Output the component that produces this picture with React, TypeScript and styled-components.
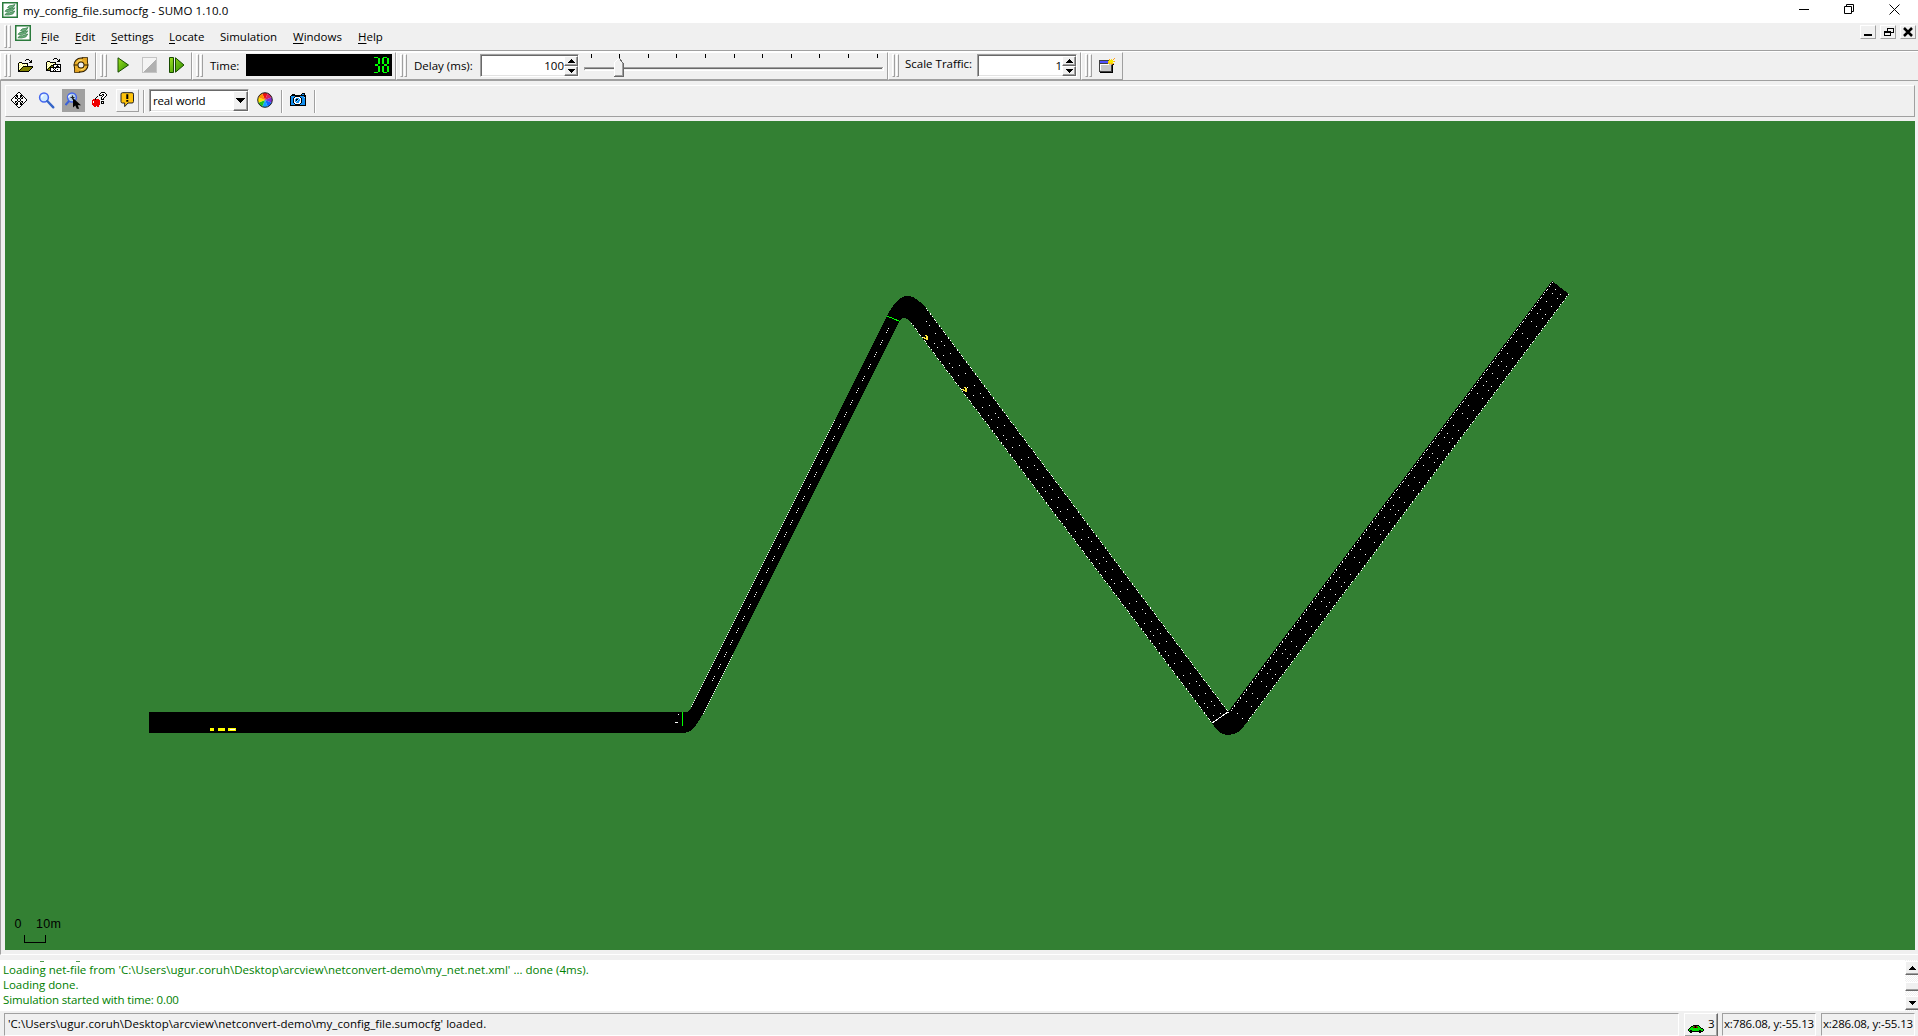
import React from "react";
import styled, { createGlobalStyle, css } from "styled-components";

const Global = createGlobalStyle`
  * { box-sizing: border-box; }
  html, body { margin: 0; padding: 0; overflow: hidden; }
  body { font: 11.5px/15px "Open Sans", "Noto Sans", sans-serif; color: #000; background: #f0f0f0; }
`;

const FACE = "#f0f0f0";
const SHADOW = "#a0a0a0";
const DARK = "#696969";

const raised = css`
  border: 1px solid;
  border-color: #fff ${SHADOW} ${SHADOW} #fff;
`;
const raisedThick = css`
  border: 1px solid;
  border-color: #fff ${DARK} ${DARK} #fff;
  box-shadow: inset -1px -1px ${SHADOW};
`;
const sunken = css`
  border: 1px solid;
  border-color: ${SHADOW} #fff #fff ${SHADOW};
  box-shadow: inset 1px 1px ${DARK}, inset -1px -1px #e3e3e3;
`;

const Window = styled.div`
  width: 1918px;
  height: 1036px;
  display: flex;
  flex-direction: column;
  background: ${FACE};
  overflow: hidden;
`;

const Label = styled.span<{ $w: number; $ls?: number }>`
  flex: none;
  width: ${(p) => p.$w}px;
  white-space: pre;
  letter-spacing: ${(p) => p.$ls ?? 0}px;
  u { text-underline-offset: 2px; }
`;

const TitleBar = styled.header`
  height: 23px;
  flex: none;
  display: flex;
  background: #fff;
  padding: 2px 18px 0 2px;
`;
const TitleText = styled(Label)`
  margin-left: 5px;
  padding-top: 1px;
`;
const CaptionButtons = styled.div`
  margin-left: auto;
  display: flex;
  gap: 35px;
  padding-top: 2px;
`;

const MenuBar = styled.nav`
  height: 28px;
  flex: none;
  display: flex;
  border-bottom: 1px solid ${SHADOW};
  padding: 2px 2px 0 4px;
`;
const MenuItems = styled.div`
  display: flex;
  gap: 16px;
  margin-left: 10px;
  padding-top: 4px;
`;
const MdiButtons = styled.div`
  margin-left: auto;
  display: flex;
  gap: 4px;
`;
const MdiButton = styled.button`
  width: 16px;
  height: 14px;
  padding: 0;
  display: flex;
  background: ${FACE};
  ${raised}
`;

const GripBox = styled.div`
  flex: none;
  display: flex;
  gap: 1px;
  height: 23px;
  i { width: 3px; ${raised} }
`;
const Grip = () => <GripBox><i /><i /></GripBox>;

const DockRow = styled.div`
  height: 30px;
  flex: none;
  display: flex;
  border-top: 1px solid #fff;
  border-bottom: 1px solid ${SHADOW};
`;
const Dock = styled.section<{ $w: number }>`
  flex: none;
  width: ${(p) => p.$w}px;
  display: flex;
  border: 1px solid;
  border-color: #fff ${SHADOW} ${SHADOW} #fff;
  padding: 1px 0 0 3px;
`;
const Slot = styled.div<{ $ml: number; $mt?: number }>`
  flex: none;
  display: flex;
  margin-left: ${(p) => p.$ml}px;
  margin-top: ${(p) => p.$mt ?? 0}px;
`;

const Lcd = styled.div`
  width: 146px;
  height: 22px;
  background: #000;
  display: flex;
  justify-content: flex-end;
  padding: 1px 2px 0 0;
`;

const NumberField = styled.div<{ $w: number }>`
  width: ${(p) => p.$w}px;
  height: 23px;
  display: flex;
  justify-content: flex-end;
  align-items: center;
  background: #fff;
  ${sunken}
`;
const Spinner = styled.div`
  display: flex;
  flex-direction: column;
  width: 14px;
  height: 20px;
`;
const SpinButton = styled.button`
  width: 14px;
  height: 10px;
  padding: 0;
  display: flex;
  background: ${FACE};
  ${raisedThick}
`;

const ViewFrame = styled.main`
  height: 874px;
  flex: none;
  display: flex;
  flex-direction: column;
  border-left: 1px solid ${SHADOW};
  border-bottom: 1px solid #fff;
  padding: 4px 3px 0 4px;
`;
const ViewBar = styled.div`
  height: 32px;
  flex: none;
  display: flex;
  border: 1px solid;
  border-color: #fff ${SHADOW} ${SHADOW} #fff;
  padding-top: 3px;
`;
const ToolButton = styled.button<{ $pressed?: boolean; $raised?: boolean }>`
  flex: none;
  width: 23px;
  height: 23px;
  padding: 2px;
  display: flex;
  border: 1px solid transparent;
  background: ${(p) => (p.$pressed ? SHADOW : "transparent")};
  ${(p) => p.$raised && raised}
`;
const Divider = styled.i<{ $ml: number }>`
  flex: none;
  width: 2px;
  height: 23px;
  margin-top: 1px;
  margin-left: ${(p) => p.$ml}px;
  background: linear-gradient(90deg, ${SHADOW} 1px, #fff 1px);
`;
const Combo = styled.div`
  flex: none;
  width: 100px;
  height: 23px;
  display: flex;
  align-items: center;
  justify-content: space-between;
  background: #fff;
  margin-left: 4px;
  padding-left: 3px;
  ${sunken}
`;
const ComboButton = styled.button`
  width: 15px;
  height: 20px;
  padding: 0;
  display: flex;
  align-items: center;
  justify-content: center;
  background: ${FACE};
  ${raisedThick}
`;

const Canvas = styled.svg`
  flex: none;
  display: block;
  margin-top: 4px;
  background: #338033;
`;

const LogArea = styled.div`
  height: 51px;
  flex: none;
  margin-top: 5px;
  display: flex;
  justify-content: space-between;
  background: #fff;
  color: #008000;
`;
const LogLines = styled.div`
  display: flex;
  flex-direction: column;
  padding-left: 3px;
`;
/* Bottom edge of the log row that is scrolled out above the visible lines. */
const ScrolledRow = styled.div`
  height: 1px;
  margin: 1px 0 0 37px;
  display: flex;
  gap: 32px;
  i { width: 4px; background: #4d9a4d; }
`;
const ScrollBar = styled.div`
  width: 13px;
  display: flex;
  flex-direction: column;
  background: repeating-conic-gradient(#fff 0 25%, ${FACE} 0 50%) 0 0 / 2px 2px;
`;
const ScrollPart = styled.div<{ $h: number; $mt: number }>`
  width: 15px;
  height: ${(p) => p.$h}px;
  margin-top: ${(p) => p.$mt}px;
  background: ${FACE};
  ${raisedThick}
  display: flex;
`;

const StatusBar = styled.footer`
  height: 26px;
  flex: none;
  display: flex;
  padding: 2px 3px 0 4px;
`;
const StatusCell = styled.div<{ $w: number; $ml?: number }>`
  width: ${(p) => p.$w}px;
  height: 23px;
  margin-left: ${(p) => p.$ml ?? 0}px;
  border: 1px solid;
  border-color: ${SHADOW} #fff #fff ${SHADOW};
  padding: 2px 0 0 1px;
`;
const CarButton = styled.button`
  width: 34px;
  height: 24px;
  margin-left: 5px;
  padding: 1px 0 0 3px;
  display: flex;
  font: inherit;
  background: ${FACE};
  ${raisedThick}
`;

/* Sprites are rows of palette keys; one character is one pixel. */
const PALETTE: Record<string, string> = {
  k: "#000", w: "#fff", y: "#ffff80", o: "#808000",
  c: "#9fd8ff", r: "#f00000", a: "#ffa020", l: "#c8c8c8", G: "#00e000",
  B: "#5050ff", n: "#f8e800", d: "#404040", p: "#1490f0", D: "#800000",
};
const Sprite = ({ rows }: { rows: string[] }) => (
  <svg width={Math.max(...rows.map((r) => r.length))} height={rows.length} shapeRendering="crispEdges">
    {rows.flatMap((row, y) =>
      [...row].map((ch, x) =>
        PALETTE[ch] ? <rect key={`${x}-${y}`} x={x} y={y} width={1} height={1} fill={PALETTE[ch]} /> : null
      )
    )}
  </svg>
);

const OPEN = [
  ".........kkk....",
  "........k...k.k.",
  ".............kk.",
  "..kkk.......kkk.",
  ".kywykkkkkk.....",
  ".kwywywywyk.....",
  ".kywywywywk.....",
  ".kwywykkkkkkkkkk",
  ".kywykoooooooook",
  ".kwykoooooooook.",
  ".kykoooooooook..",
  ".kkoooooooook...",
  ".kkkkkkkkkkk....",
];
const OPEN_CONFIG = [
  ".........kkk....",
  "........k...k.k.",
  ".............kk.",
  "..kkk.......kkk.",
  ".kywykkkkkk.....",
  ".kwywywywyk.....",
  ".kywywywkkkkkkkk",
  ".kwywykkkwwwkwwk",
  ".kywykookwwkkkwk",
  ".kwykkkkkkkkkkkk",
  ".kykokwwkwkwwwwk",
  ".kkookwwwkwwkwwk",
  ".kkkkkwwkwkwwwwk",
  ".....kkkkkkkkkkk",
];
const MOVE = [
  ".......kk.......",
  "......kwwk......",
  ".....kwwwwk.....",
  "....kkkwwkkk....",
  "...k.kkwwkk.k...",
  "..kwk.kwwk.kwk..",
  ".kwwkk.kk.kkwwk.",
  "kwwwwwk..kwwwwwk",
  "kwwwwwk..kwwwwwk",
  ".kwwkk.kk.kkwwk.",
  "..kwk.kwwk.kwk..",
  "...k.kkwwkk.k...",
  "....kkkwwkkk....",
  ".....kwwwwk.....",
  "......kwwk......",
  ".......kk.......",
];
const APPLE = [
  ".........kkkk...",
  "........kwwwwk..",
  ".......kwwkkwwk.",
  ".......kkk.kwwk.",
  ".....k....kwwk..",
  "....k....kwwk...",
  "...k.....kwk....",
  ".rrkrrr..kkk....",
  "rrrrrrrr........",
  "rwrrrrrr.kkk....",
  "rwrrrrrr.kwk....",
  "rrrrrrrr.kkk....",
  "rrrrrrrr........",
  ".rrrrrr.........",
  "..rr.rr.........",
];
const CAMERA = [
  "............kkk.",
  "..kkk......kppk.",
  ".kkkkkkkkkkkkkkk",
  "kppppkkkkkppppkk",
  "kpppkwwwwwkpppck",
  "kppkwwpppwwkpppk",
  "kppkwpkkcpwkpppk",
  "kppkwpkcppwkpppk",
  "kppkwpcppcwkpppk",
  "kppkwwpppwwkpppk",
  "kpppkwwwwwkppppk",
  "kppppkkkkkpppppk",
  "kkkkkkkkkkkkkkkk",
];
const NEW_WINDOW = [
  "...............a",
  "..........a.n.a.",
  "ddddddddddnnnn..",
  "dBBBBBBBBnnnnnna",
  "dBBBBBBBBannnn..",
  "dddddddddnanana.",
  "dwwwwwwwwwlladk.",
  "dwlllllllllldk..",
  "dwlllllllllldk..",
  "dwlllllllllldk..",
  "dwlllllllllldk..",
  "dwlllllllllldk..",
  "dlllllllllll dk.".replace(" ", ""),
  "dddddddddddddk..",
  ".kkkkkkkkkkkkk..",
];
const CAR = [
  ".....kkkkkk.....",
  "...kkGDkDGGk....",
  "..kGGDDkDDGGk...",
  ".kGGGGGGGGGGGkk.",
  "kGGGGGGGGGGGGGGk",
  "kGkkGGGGGGGkkGGk",
  ".kkkkkkkkkkkkkk.",
  "..kk.......kk...",
];

const Logo = () => (
  <svg width="16" height="16">
    <rect x=".75" y=".75" width="14.5" height="14.5" fill="#fff" stroke="#2a7a3c" strokeWidth="1.5" />
    <g fill="#6fae7f" stroke="#2c7a41" strokeWidth=".7">
      <path d="M5.500 5.500Q7 3 10 3.500L13 2.500 11.500 5 8 6.800z" />
      <path d="M3 9.300Q4.500 6.500 7.500 7.300L12.800 5.800 11 8.600 6.500 9.600z" />
      <path d="M2.800 12.800Q4.500 10 7.500 10.800L12.800 9 10.800 12 6.500 13z" />
    </g>
  </svg>
);

const Reload = () => (
  <svg width="16" height="16">
    <circle cx="8" cy="8" r="5" fill="none" stroke="#2a1c00" strokeWidth="5" />
    <path d="M9 .4h5.500V7.500L11.500 5.500zM7 15.600H1.500V8.500L4.500 10.500z" fill="#e0a020" stroke="#2a1c00" strokeWidth=".8" />
    <circle cx="8" cy="8" r="5" fill="none" stroke="#eab02c" strokeWidth="3" />
    <path d="M4 5.500A5 5 0 0 1 9 3.200M12 10.500A5 5 0 0 1 7.500 12.800" fill="none" stroke="#ffe07a" />
    <path d="M.8 8h4M11.200 8h4" stroke="#2a1c00" />
  </svg>
);

const Lens = ({ cursor }: { cursor?: boolean }) => (
  <svg width="17" height="17">
    <circle cx={cursor ? 7 : 6} cy="5.5" r="4.4" fill={cursor ? "#b4cfea" : "#cfeaff"} stroke="#4466ee" strokeWidth="1.5" />
    <path d="M3.500 5.500a2.500 2.500 0 0 1 2-2.300" fill="none" stroke="#fff" strokeWidth="1.3" />
    {cursor ? (
      <>
        <path d="M4 9 .5 13" stroke="#3b62d8" strokeWidth="2" />
        <path d="M5.500 5.500h4M7.500 3.500v4" stroke="#222" strokeWidth="1.200" />
        <path d="M8 6v9.500l2.300-2 1.500 3.300h2.400l-1.500-3.600H16z" fill="#000" />
      </>
    ) : (
      <path d="m9.300 9 6 6.300" stroke="#3465c8" strokeWidth="2.400" strokeLinecap="round" />
    )}
  </svg>
);

const Bubble = () => (
  <svg width="17" height="16">
    <path d="M3.500 .7h9.500a1.500 1.500 0 0 1 1.500 1.500v7.300a1.500 1.500 0 0 1-1.500 1.500H9l-3.300 3.600V11H3.500A1.500 1.500 0 0 1 2 9.500V2.200A1.500 1.500 0 0 1 3.500 .7z" fill="#ffc30b" stroke="#222" />
    <path d="M7.300 2.200h2V7h-2zM7.300 8h2v1.800h-2z" fill="#000" />
  </svg>
);

const WHEEL = ["#f01010", "#d82060", "#8030d0", "#1060ff", "#10a0ff", "#20c020", "#ffe000", "#ff9000"];
const Wheel = () => (
  <svg width="16" height="16">
    {WHEEL.map((c, i) => {
      const a = ((i * 45 - 112.5) * Math.PI) / 180;
      const b = ((i * 45 - 67.5) * Math.PI) / 180;
      return <path key={c} fill={c} d={`M8 8L${8 + 7.3 * Math.cos(a)} ${8 + 7.3 * Math.sin(a)}A7.3 7.3 0 0 1 ${8 + 7.3 * Math.cos(b)} ${8 + 7.3 * Math.sin(b)}z`} />;
    })}
    <circle cx="8" cy="8" r="7.3" fill="none" stroke="#222" />
  </svg>
);

const ArrowSvg = styled.svg`
  flex: none;
`;
const Arrow = ({ up, w = 7, x = 0, y = 0 }: { up?: boolean; w?: number; x?: number; y?: number }) => {
  const h = (w + 1) / 2;
  return (
    <ArrowSvg width={w + x} height={h + y} shapeRendering="crispEdges">
      {Array.from({ length: h }, (_, i) => (
        <rect key={i} x={x + i} y={y + (up ? h - 1 - i : i)} width={w - 2 * i} height={1} />
      ))}
    </ArrowSvg>
  );
};

const Play = () => (
  <svg width="13" height="16">
    <defs>
      <linearGradient id="leaf" x1="0" y1="0" x2="1" y2="1">
        <stop offset="0" stopColor="#9be020" />
        <stop offset="1" stopColor="#2f8f00" />
      </linearGradient>
    </defs>
    <path d="M1 .8 11.500 8 1 15.200z" fill="url(#leaf)" stroke="#174a00" />
  </svg>
);
const Stop = () => (
  <svg width="15" height="16" shapeRendering="crispEdges">
    <path d="M0 0h15v16H0z" fill="#c4c4c4" />
    <path d="M1 1h13v14H1z" fill="#f4f4f4" />
    <path d="M14 2v13H2z" fill="#b0b0b0" />
  </svg>
);
const Step = () => (
  <svg width="16" height="16">
    <path d="M.5 .5h4v15h-4zM6.500 .8 15 8 6.500 15.200z" fill="url(#leaf)" stroke="#174a00" />
  </svg>
);

const LcdDigits = () => (
  <svg width="17" height="20" fill="#00ff00" shapeRendering="crispEdges">
    <path d="M1 2h4v1H1zM2 9h3v2H2zM1 17h4v1H1z" />
    <path d="M5 3h2v6H5zM5 11h2v6H5z" />
    <path d="M10 2h4v1h-4zM11 9h3v2h-3zM10 17h4v1h-4z" />
    <path d="M9 3h2v6H9zM9 11h2v6H9zM14 3h2v6h-2zM14 11h2v6h-2z" />
  </svg>
);

const Slider = () => (
  <svg width="300" height="25" shapeRendering="crispEdges">
    {Array.from({ length: 11 }, (_, i) => (
      <rect key={i} x={Math.floor(7.1 + i * 28.6)} y={0} width={1} height={4} />
    ))}
    <path d="M0 13h299v1H0zM0 13h1v3H0z" fill={SHADOW} />
    <path d="M1 14h297v1H1z" fill={DARK} />
    <path d="M1 16h298v-3h1v4H1z" fill="#fff" />
    <path d="M30 22V9l5-5 4 5v13z" fill={FACE} />
    <path d="M30 22V9l5-5" stroke="#fff" fill="none" />
    <path d="M30 22h9V9l-4-5" stroke={DARK} fill="none" />
    <path d="M31 21h7V9" stroke={SHADOW} fill="none" />
  </svg>
);

type Pt = [number, number];
/* Pixel dots along a line: a dot is set wherever the row matches the repeating mask. */
const dots = (a: Pt, b: Pt, mask: string) => {
  const n = Math.abs(b[1] - a[1]);
  const out: React.ReactNode[] = [];
  for (let i = 0; i <= n; i++) {
    if (mask[i % mask.length] !== "1") continue;
    const x = Math.round(a[0] + ((b[0] - a[0]) * i) / n);
    const y = Math.round(a[1] + ((b[1] - a[1]) * i) / n);
    out.push(<rect key={i} x={x} y={y} width={1} height={1} fill="#fff" />);
  }
  return <g>{out}</g>;
};
const gaps = (...g: number[]) => g.map((n) => "1" + "0".repeat(n - 1)).join("");
const LANE = gaps(4, 8, 8, 4, 8, 12, 8, 12, 8);
const CARS: Pt[] = [[923, 335], [962, 387]];

const Network = () => (
  <Canvas width="1910" height="829" viewBox="5 121 1910 829" shapeRendering="crispEdges">
    <path d="M149 712H687Q690 711 692 706L887 316Q892 306 897 301Q902 296 907 296Q914 296 920 302L926 308L1228 712L1552 281L1569 294L1248 721Q1243 728 1238 732Q1233 735 1228 735Q1222 735 1217 730L1212 723L911 323Q908 318 904 318Q901 318 899 322L703 714Q696 726 692 730Q688 733 683 733H149z" />
    {dots([834, 420], [691, 706], "10")}
    {dots([732, 655], [703, 713], "10")}
    {dots([888, 328], [709, 686], "101010000000")}
    {dots([926, 308], [1228, 712], "101001")}
    {dots([911, 323], [1212, 723], "101001")}
    {dots([934, 343], [1215, 718], LANE)}
    {dots([926, 321], [1221, 714], LANE)}
    {dots([1552, 282], [1229, 712], "10101001")}
    {dots([1568, 294], [1247, 721], "10101001")}
    {dots([1555, 289], [1236, 714], LANE)}
    {dots([1560, 294], [1241, 719], LANE)}
    <path d="M682 712h1v14h-1z" fill="#00ff00" />
    <path d="M887 316 900 321.500" stroke="#00ff00" />
    <path d="M1212 723 1228 712" stroke="#fff" />
    <path d="M675 722h3v1h-3zM678 714h1v1h-1z" fill="#fff" />
    <path d="M210 728h4v3h-4zM218 728h7v3h-7zM228 728h8v3h-8z" fill="#ffff00" />
    <path d="M230 729h5v1h-5z" fill="#fff" />
    {CARS.map(([x, y]) => (
      <path key={x} transform={`translate(${x} ${y})`} fill="#ffe83c" d="M2 0h2v1H2zM0 2h2v1H0zM3 1h2v3H3zM1 3h2v1H1zM3 4h2v1H3z" />
    ))}
    <path d="M24.500 935v7.500h21V935" fill="none" stroke="#000" />
    <g fontFamily='"Liberation Sans", sans-serif' fontSize="12.500">
      <text x="14.500" y="928">0</text>
      <text x="36" y="928" textLength="25">10m</text>
    </g>
  </Canvas>
);

const MENUS: [string, string, number][] = [
  ["F", "ile", 18],
  ["E", "dit", 20],
  ["S", "ettings", 42],
  ["L", "ocate", 35],
  ["", "Simulation", 57],
  ["W", "indows", 49],
  ["H", "elp", 25],
];

const NumberSpin = ({ value, w }: { value: string; w: number }) => (
  <NumberField $w={w}>
    {value}
    <Spinner>
      <SpinButton><Arrow up x={3} y={2} /></SpinButton>
      <SpinButton><Arrow x={3} y={2} /></SpinButton>
    </Spinner>
  </NumberField>
);

export default function App() {
  return (
    <Window>
      <Global />
      <TitleBar>
        <Logo />
        <TitleText $w={206} $ls={0.07}>my_config_file.sumocfg - SUMO 1.10.0</TitleText>
        <CaptionButtons>
          <svg width="10" height="11"><path d="M0 5.500h10" stroke="#000" /></svg>
          <svg width="10" height="11"><path d="M.5 2.500h7v7h-7zM2.500 2.500v-2h7v7h-2" fill="none" stroke="#000" /></svg>
          <svg width="11" height="11"><path d="M.5 .5l10 10M10.500 .5l-10 10" stroke="#000" /></svg>
        </CaptionButtons>
      </TitleBar>

      <MenuBar>
        <Grip />
        <Slot $ml={4}><Logo /></Slot>
        <MenuItems>
          {MENUS.map(([key, rest, w]) => (
            <Label key={rest} $w={w}>{key && <u>{key}</u>}{rest}</Label>
          ))}
        </MenuItems>
        <MdiButtons>
          <MdiButton><svg width="14" height="12"><path d="M3 8h8v2H3z" /></svg></MdiButton>
          <MdiButton>
            <svg width="14" height="12" shapeRendering="crispEdges" fill="none" stroke="#000">
              <path d="M6.500 5V2.500h6v4H10M3.500 6.500h6v3h-6zM6 2h7M3 5.500h7" />
            </svg>
          </MdiButton>
          <MdiButton><svg width="14" height="12"><path d="m3 2 8 8M11 2l-8 8" stroke="#000" strokeWidth="2.500" /></svg></MdiButton>
        </MdiButtons>
      </MenuBar>

      <DockRow>
        <Dock $w={96}>
          <Grip />
          <Slot $ml={6} $mt={5}><Sprite rows={OPEN} /></Slot>
          <Slot $ml={12} $mt={4}><Sprite rows={OPEN_CONFIG} /></Slot>
          <Slot $ml={12} $mt={3}><Reload /></Slot>
        </Dock>
        <Dock $w={96}>
          <Grip />
          <Slot $ml={10} $mt={3}><Play /></Slot>
          <Slot $ml={12} $mt={3}><Stop /></Slot>
          <Slot $ml={12} $mt={3}><Step /></Slot>
        </Dock>
        <Dock $w={204}>
          <Grip />
          <Slot $ml={7} $mt={4}><Label $w={36}>Time:</Label></Slot>
          <Slot $ml={0}><Lcd><LcdDigits /></Lcd></Slot>
        </Dock>
        <Dock $w={492}>
          <Grip />
          <Slot $ml={7} $mt={4}><Label $w={66}>Delay (ms):</Label></Slot>
          <NumberSpin value="100" w={99} />
          <Slot $ml={5}><Slider /></Slot>
        </Dock>
        <Dock $w={193}>
          <Grip />
          <Slot $ml={6} $mt={2}><Label $w={72}>Scale Traffic:</Label></Slot>
          <NumberSpin value="1" w={100} />
        </Dock>
        <Dock $w={42}>
          <Grip />
          <Slot $ml={7} $mt={4}><Sprite rows={NEW_WINDOW} /></Slot>
        </Dock>
      </DockRow>

      <ViewFrame>
        <ViewBar>
          <Slot $ml={2}><ToolButton><Sprite rows={MOVE} /></ToolButton></Slot>
          <Slot $ml={4}><ToolButton><Lens /></ToolButton></Slot>
          <Slot $ml={4}><ToolButton $pressed><Lens cursor /></ToolButton></Slot>
          <Slot $ml={4}><ToolButton><Sprite rows={APPLE} /></ToolButton></Slot>
          <Slot $ml={4}><ToolButton $raised><Bubble /></ToolButton></Slot>
          <Divider $ml={4} />
          <Combo>
            <Label $w={60} $ls={-0.15}>real world</Label>
            <ComboButton><Arrow w={9} /></ComboButton>
          </Combo>
          <Slot $ml={5}><ToolButton><Wheel /></ToolButton></Slot>
          <Divider $ml={4} />
          <Slot $ml={4} $mt={1}><ToolButton><Sprite rows={CAMERA} /></ToolButton></Slot>
          <Divider $ml={4} />
        </ViewBar>
        <Network />
      </ViewFrame>

      <LogArea>
        <LogLines>
          <ScrolledRow><i /><i /></ScrolledRow>
          <Label $w={590} $ls={0.02}>Loading net-file from 'C:\Users\ugur.coruh\Desktop\arcview\netconvert-demo\my_net.net.xml' ... done (4ms).</Label>
          <Label $w={300} $ls={-0.05}>Loading done.</Label>
          <Label $w={300} $ls={-0.13}>Simulation started with time: 0.00</Label>
        </LogLines>
        <ScrollBar>
          <ScrollPart $h={14} $mt={1}><Arrow up x={3} y={4} /></ScrollPart>
          <ScrollPart $h={9} $mt={7} />
          <ScrollPart $h={14} $mt={5}><Arrow x={3} y={4} /></ScrollPart>
        </ScrollBar>
      </LogArea>

      <StatusBar>
        <StatusCell $w={1675}><Slot $ml={2}><Label $w={500} $ls={0.04}>'C:\Users\ugur.coruh\Desktop\arcview\netconvert-demo\my_config_file.sumocfg' loaded.</Label></Slot></StatusCell>
        <CarButton>
          <Slot $ml={0} $mt={10}><Sprite rows={CAR} /></Slot>
          <Slot $ml={4} $mt={1}>3</Slot>
        </CarButton>
        <StatusCell $w={94} $ml={4}><Label $w={90} $ls={-0.15}>x:786.08, y:-55.13</Label></StatusCell>
        <StatusCell $w={94} $ml={5}><Label $w={90} $ls={-0.15}>x:286.08, y:-55.13</Label></StatusCell>
      </StatusBar>
    </Window>
  );
}
